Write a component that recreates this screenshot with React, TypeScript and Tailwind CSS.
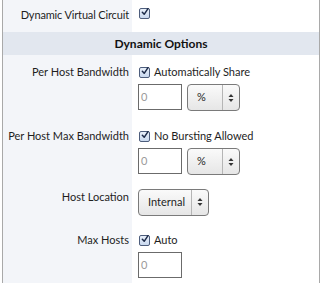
import React from 'react';

// Dynamic options form panel

function Check() {
  return (
    <span className="inline-flex h-[11px] w-[11px] shrink-0 items-center justify-center rounded-[2px] border border-[#4d5d7c] bg-gradient-to-b from-[#e9f0fa] to-[#c9d8ee]">
      <svg width="12" height="12" viewBox="0 0 12 12" className="-mt-[3px] ml-[1px]">
        <path d="M2 6.5 L4.8 9.5 L10.5 1" fill="none" stroke="#1c2a48" strokeWidth="2.2" strokeLinecap="round" strokeLinejoin="round" />
      </svg>
    </span>
  );
}

function CheckLine({ label }: { label: string }) {
  return (
    <div className="flex h-4 items-center gap-[4px] pl-[2px]">
      <Check />
      <span>{label}</span>
    </div>
  );
}

function NumInput() {
  return (
    <div className="flex h-[26px] w-[44px] items-center border border-[#6b6b6b] bg-white pl-[2px] text-[#9a9a9a]">
      0
    </div>
  );
}

function Select({ value, width }: { value: string; width: string }) {
  return (
    <div className={`flex h-[27px] items-stretch rounded-[4px] border border-[#7a7a7a] bg-gradient-to-b from-[#fafafa] to-[#e6e6e6] ${width}`}>
      <span className="flex flex-1 items-center pl-[9px]">{value}</span>
      <span className="flex w-[17px] items-center justify-center border-l border-[#b5b5b5]">
        <svg width="6" height="10" viewBox="0 0 6 10">
          <path d="M3 1 L5.5 4 L0.5 4 Z" fill="#333" />
          <path d="M3 9 L5.5 6 L0.5 6 Z" fill="#333" />
        </svg>
      </span>
    </div>
  );
}

function Row({ label, children, className = '' }: { label: string; children: React.ReactNode; className?: string }) {
  return (
    <div className={`flex ${className}`}>
      <div className="w-[129px] shrink-0 pr-[3px] text-right">
        <div className="flex h-4 items-center justify-end whitespace-nowrap">{label}</div>
      </div>
      <div className="flex flex-col gap-1 pl-[5px]">{children}</div>
    </div>
  );
}

export default function App() {
  return (
    <div className="h-[283px] w-[324px] overflow-hidden bg-white text-[11px] text-[#1e1e1e] [font-family:Lato,'Noto_Sans',sans-serif]">
      <div className="ml-[2px] flex h-full w-[318px] flex-col border-x border-[#a9a9a9]">
        <div className="flex h-[32px] bg-white">
          <div className="flex w-[129px] shrink-0 justify-end bg-[#f3f5f9] pt-[7px] pr-[3px]">
            <div className="flex h-4 items-center whitespace-nowrap tracking-[-0.15px]">Dynamic Virtual Circuit</div>
          </div>
          <div className="pt-[5px] pl-[5px]">
            <div className="flex h-4 items-center pl-[2px]">
              <Check />
            </div>
          </div>
        </div>

        <div className="flex h-[23px] items-center justify-center bg-[#e2e7ef] text-[12px] font-bold text-[#111]">
          Dynamic Options
        </div>

        <div className="relative flex-1">
          <div className="absolute inset-y-0 left-0 w-[129px] bg-[#f3f5f9]" />
          <div className="relative flex flex-col pt-[9px]">
            <Row label="Per Host Bandwidth">
              <CheckLine label="Automatically Share" />
              <div className="flex gap-[5px] pl-[1px]">
                <NumInput />
                <Select value="%" width="w-[53px]" />
              </div>
            </Row>
            <Row label="Per Host Max Bandwidth" className="mt-[17px]">
              <CheckLine label="No Bursting Allowed" />
              <div className="flex gap-[5px] pl-[1px]">
                <NumInput />
                <Select value="%" width="w-[53px]" />
              </div>
            </Row>
            <Row label="Host Location" className="mt-[14px]">
              <div className="flex h-[26px] items-center pl-[1px]">
                <Select value="Internal" width="w-[71px]" />
              </div>
            </Row>
            <Row label="Max Hosts" className="mt-[17px]">
              <CheckLine label="Auto" />
              <div className="flex pl-[1px]">
                <NumInput />
              </div>
            </Row>
          </div>
        </div>
      </div>
    </div>
  );
}
